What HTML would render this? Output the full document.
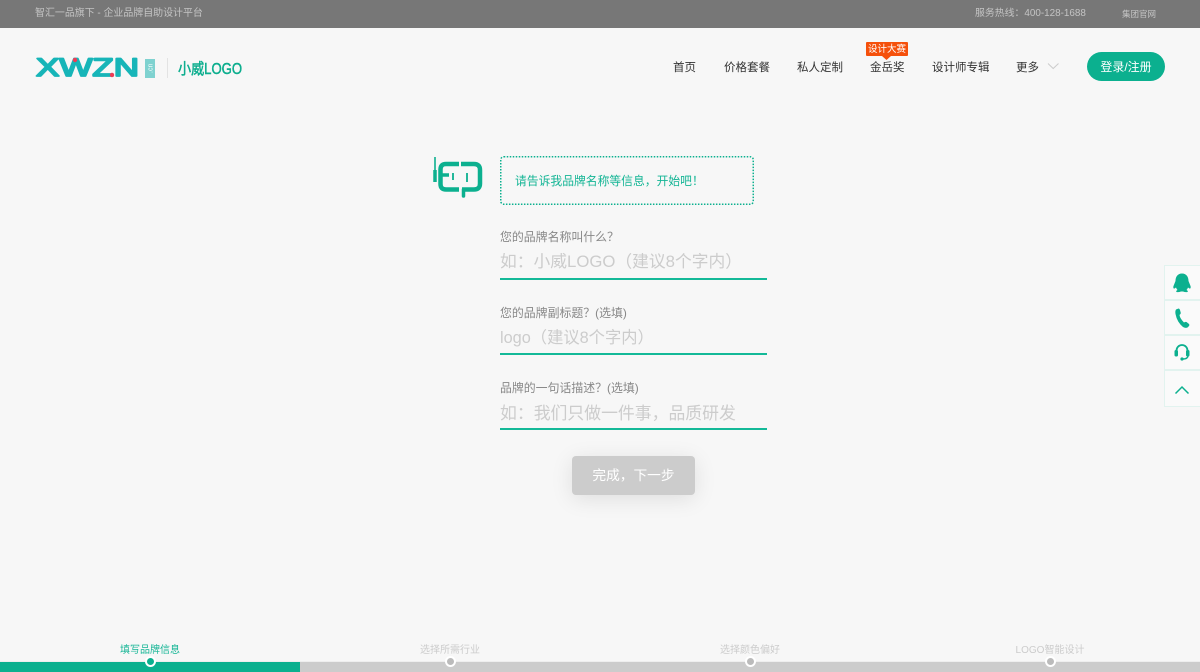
<!DOCTYPE html>
<html lang="zh-CN"><head><meta charset="utf-8"><title>小威LOGO</title>
<style>
html,body{margin:0;padding:0}
body{width:1200px;height:672px;position:relative;overflow:hidden;background:#f7f7f7;font-family:"Liberation Sans","Noto Sans CJK SC",sans-serif}
.a{position:absolute;white-space:nowrap;line-height:1}
svg{position:absolute;overflow:visible}
.lab{font-size:11.9px;color:#888;left:500px}
.ph{font-size:16.75px;color:#ccc;left:500px}
.ul{position:absolute;left:500px;width:267px;height:2px;background:#14b998}
.nav{font-size:11.5px;color:#333;top:62.5px}
.step{font-size:10px;top:645.5px;width:300px;text-align:center;color:#ccc}
.dot{position:absolute;top:656px;width:7px;height:7px;border:2px solid #fff;border-radius:50%;background:#bbb}
.cell{position:absolute;left:1164px;width:36px;height:35px;box-sizing:border-box;border:1px solid #e2f3ef;border-right:0;background:#fafafa}
</style></head><body>
<div class="a" style="left:0;top:0;width:1200px;height:28px;background:#777"></div>
<div class="a" style="left:35px;top:9px;font-size:9.95px;color:#c4c4c4">智汇一品旗下 - 企业品牌自助设计平台</div>
<div class="a" style="left:975px;top:9px;font-size:9.9px;color:#c4c4c4">服务热线：400-128-1688</div>
<div class="a" style="left:1122px;top:9.5px;font-size:8.5px;color:#c4c4c4">集团官网</div>

<svg style="left:0;top:0" width="300" height="100">
<text x="36" y="76" font-size="25" font-family="Liberation Sans" fill="#17b5b8" stroke="#17b5b8" stroke-width="1.8" stroke-linejoin="round" textLength="103" lengthAdjust="spacingAndGlyphs">XWZN</text>
<circle cx="75" cy="60" r="2.2" fill="#ee3b55"/><circle cx="112" cy="75" r="2.2" fill="#ee3b55"/>
<rect x="145" y="59" width="10" height="19" fill="#7fd2d0"/>
<text x="0" y="0" font-size="7" fill="#fff" font-family="Liberation Sans" transform="translate(152.500 73) rotate(-90)">.cn</text>
<rect x="167" y="58" width="1" height="20" fill="#e3e3e3"/>
<text x="178" y="74" font-size="15.500" font-family="Liberation Sans,Noto Sans CJK SC,sans-serif" fill="#0cae8e" stroke="#0cae8e" stroke-width=".5" textLength="64" lengthAdjust="spacingAndGlyphs">小威LOGO</text>
</svg>

<div class="a nav" style="left:673px">首页</div>
<div class="a nav" style="left:724px">价格套餐</div>
<div class="a nav" style="left:797px">私人定制</div>
<div class="a nav" style="left:870px">金岳奖</div>
<div class="a nav" style="left:932px">设计师专辑</div>
<div class="a nav" style="left:1016px">更多</div>
<svg style="left:1047px;top:62px" width="13" height="9"><path d="M1 1.500L6.200 6.500L11.500 1.500" fill="none" stroke="#ccc" stroke-width="1"/></svg>
<div class="a" style="left:866px;top:42px;width:42px;height:14px;line-height:15px;background:#f5500b;border-radius:1px;color:#fff;font-size:9.5px;text-align:center">设计大赛</div>
<svg style="left:882px;top:56px" width="10" height="4"><path d="M0 0H9L4.500 4Z" fill="#f5500b"/></svg>
<div class="a" style="left:1087px;top:52px;width:78px;height:29px;line-height:30px;border-radius:15px;background:#0bb08f;color:#fff;font-size:12px;text-align:center">登录/注册</div>

<svg style="left:430px;top:152px" width="60" height="50">
<path d="M5 5V30" stroke="#0cb08f" stroke-width="1.600" fill="none"/>
<path d="M5 18V30" stroke="#0cb08f" stroke-width="3.500" fill="none"/>
<path d="M29 12H16Q10.500 12 10.500 17.500V32Q10.500 37.500 16 37.500H29" stroke="#0cb08f" stroke-width="4.500" fill="none"/>
<path d="M10.500 23H19" stroke="#0cb08f" stroke-width="3.500" fill="none"/>
<path d="M31 12H44Q50 12 50 18V31.500Q50 37.500 44 37.500H32" stroke="#0cb08f" stroke-width="4.500" fill="none"/>
<path d="M33.500 37.500V44" stroke="#0cb08f" stroke-width="3.500" fill="none" stroke-linecap="round"/>
<path d="M23 21V28M37 21V30" stroke="#0cb08f" stroke-width="1.800" fill="none"/>
</svg>
<svg style="left:500px;top:156px" width="254" height="49"><rect x=".75" y=".75" width="252.500" height="47.500" rx="3" fill="none" stroke="#0cb08f" stroke-width="1.500" stroke-dasharray="1.500 1.500"/></svg>
<div class="a" style="left:515px;top:176px;font-size:11.8px;color:#14b595">请告诉我品牌名称等信息，开始吧！</div>

<div class="a lab" style="top:232px">您的品牌名称叫什么？</div>
<div class="a ph" style="top:254px">如：小威LOGO（建议8个字内）</div>
<div class="ul" style="top:278px"></div>
<div class="a lab" style="top:308px">您的品牌副标题？(选填)</div>
<div class="a ph" style="top:329.5px;font-size:16.3px">logo（建议8个字内）</div>
<div class="ul" style="top:353px"></div>
<div class="a lab" style="top:382.5px">品牌的一句话描述？(选填)</div>
<div class="a ph" style="top:406px;font-size:16.85px">如：我们只做一件事，品质研发</div>
<div class="ul" style="top:428px"></div>

<div class="a" style="left:572px;top:456px;width:123px;height:39px;line-height:40px;background:#ccc;border-radius:4px;box-shadow:0 4px 22px rgba(0,0,0,.1);color:#fff;font-size:13.7px;text-align:center">完成，下一步</div>

<div class="cell" style="top:265px"></div><div class="cell" style="top:300px"></div><div class="cell" style="top:335px"></div>
<div class="cell" style="top:370px;height:37px"></div>
<svg style="left:1164px;top:265px" width="36" height="142" fill="#0cb08f">
<path d="M18 8.500C13.500 8.500 11.500 12 11.500 16L9.500 21C9 22.500 9.500 24 10.500 23.500L12 22.500Q12.500 24 13.500 25Q11.500 26 12.500 27Q14.500 27.500 17 26.500H19Q21.500 27.500 23.500 27Q24.500 26 22.500 25Q23.500 24 24 22.500L25.500 23.500C26.500 24 27 22.500 26.500 21L24.500 16C24.500 12 22.500 8.500 18 8.500Z"/>
<path d="M12 44.500L14.500 43.500Q15.500 43.500 16 45L16.800 48Q16.800 49 15.500 50Q16 53.500 20 57.500Q21.500 56.500 22.500 57L25 59Q25.800 60 25 61L23.500 62.500Q21.500 63.500 19 62Q13 57 11.500 49Q11 46 12 44.500Z"/>
<path d="M12.500 88V85.500A5.500 5.500 0 0 1 23.500 85.500V88" fill="none" stroke="#0cb08f" stroke-width="1.800"/>
<rect x="10.500" y="85" width="3.500" height="6.500" rx="1.500"/><rect x="22" y="85" width="3.500" height="6.500" rx="1.500"/>
<path d="M24 91Q23.500 94 19 94" fill="none" stroke="#0cb08f" stroke-width="1.500"/><circle cx="18" cy="94" r="1.600"/>
<path d="M11.500 128.500L18 122L24.500 128.500" fill="none" stroke="#0cb08f" stroke-width="1.500"/>
</svg>

<div class="a step" style="left:0;color:#14b595">填写品牌信息</div>
<div class="a step" style="left:300px">选择所需行业</div>
<div class="a step" style="left:600px">选择颜色偏好</div>
<div class="a step" style="left:900px">LOGO智能设计</div>
<div class="a" style="left:0;top:661px;width:1200px;height:1px;background:#eee"></div>
<div class="a" style="left:300px;top:662px;width:900px;height:10px;background:#ccc"></div>
<div class="a" style="left:0;top:662px;width:300px;height:10px;background:#0bb08f"></div>
<div class="dot" style="left:144.500px;background:#0bb08f"></div>
<div class="dot" style="left:444.500px"></div>
<div class="dot" style="left:744.500px"></div>
<div class="dot" style="left:1044.500px"></div>
</body></html>
